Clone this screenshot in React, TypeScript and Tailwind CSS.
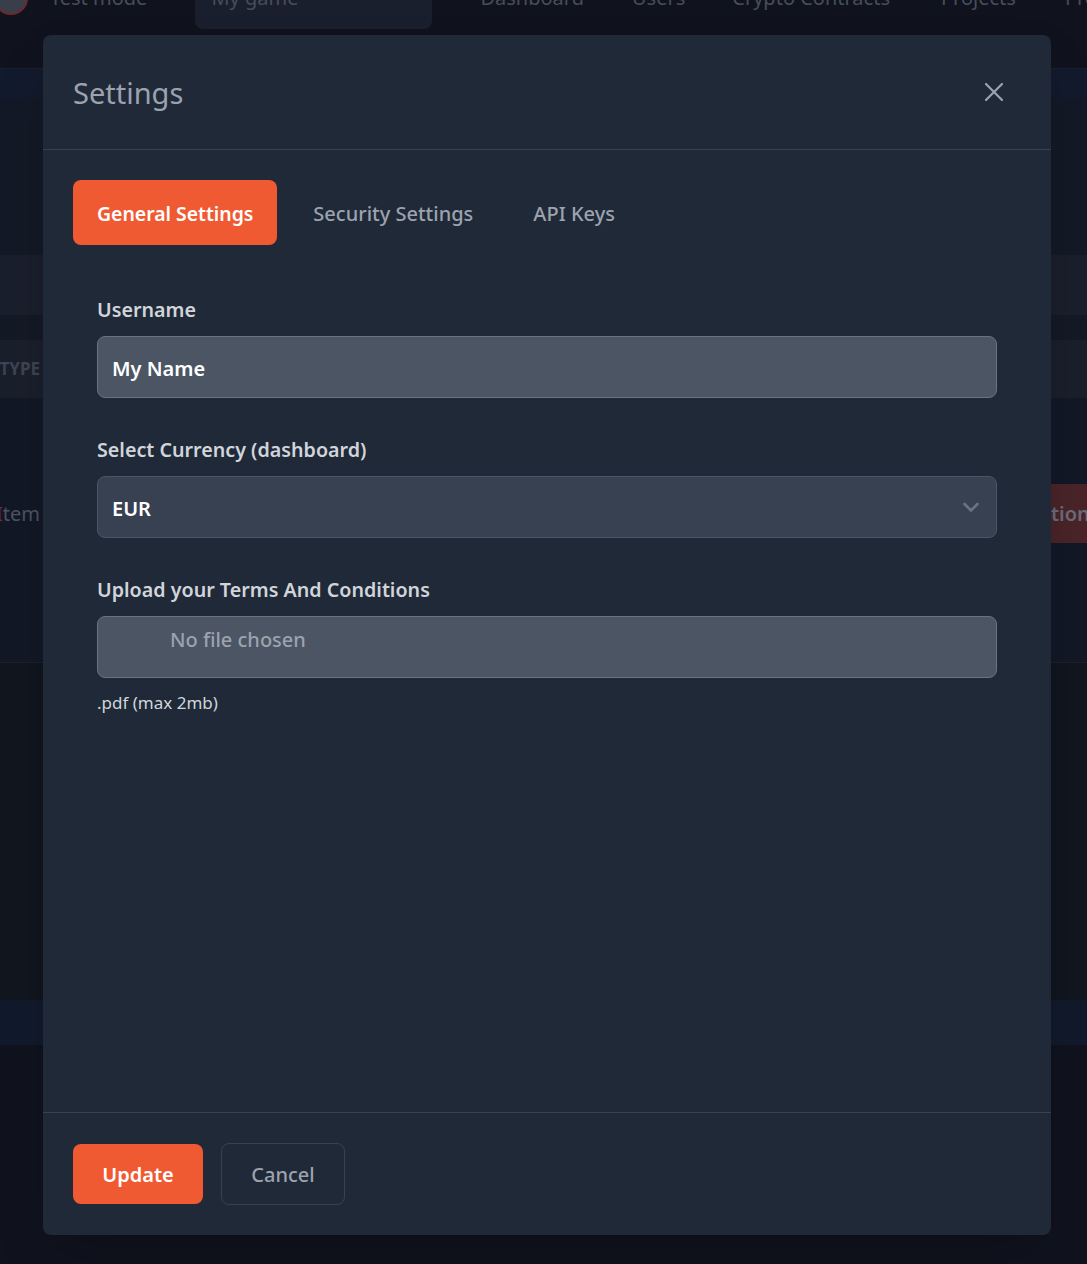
import React from "react";

const font = { fontFamily: '"Noto Sans", "Open Sans", Arial, sans-serif' };

function Background() {
  return (
    <div className="flex flex-col w-full">
      {/* top nav (scrolled partially out of view) */}
      <div className="h-[68px] bg-[#10131d] overflow-hidden">
        <div className="-mt-[33px] h-[62px] flex items-center text-[20px] text-[#474d5b] whitespace-nowrap">
          <div className="-ml-[6px] w-[34px] h-[34px] rounded-full bg-[#3a3e4a] border-2 border-[#6a2b2f] shrink-0" />
          <span className="ml-[22px] shrink-0">Test mode</span>
          <div className="ml-[48px] w-[237px] shrink-0 h-[62px] rounded-lg bg-[#1a1f2d] flex items-center px-4 text-[#474d5b]">
            <span className="flex-1">My game</span>
          </div>
          <span className="ml-[48px] shrink-0">Dashboard</span>
          <span className="ml-[48px] shrink-0">Users</span>
          <span className="ml-[47px] shrink-0">Crypto Contracts</span>
          <span className="ml-[51px] shrink-0">Projects</span>
          <span className="ml-[49px] shrink-0">Profile</span>
        </div>
      </div>
      <div className="h-[30px] bg-[#121a2d] border-t border-[#1a2030]" />
      <div className="h-[157px] bg-[#131926]" />
      <div className="h-[60px] bg-[#1a1f2d]" />
      <div className="h-[25px] bg-[#141926]" />
      <div className="h-[58px] bg-[#1a1f2c] flex items-center">
        <span className="w-[40px] overflow-hidden flex justify-end whitespace-nowrap text-[17px] font-bold text-[#3e4453]">TYPE</span>
      </div>
      <div className="h-[86px] bg-[#121826]" />
      <div className="h-[59px] bg-[#121826] flex items-center">
        <span className="w-[40px] overflow-hidden flex justify-end whitespace-nowrap text-[20px] text-[#4e5461]">
          <span className="text-[#7a2a30]">I</span>tem
        </span>
        <div className="flex-1" />
        <div className="w-[36px] h-[59px] bg-[#4a2429] overflow-hidden flex items-center whitespace-nowrap text-[20px] font-semibold text-[#6a6d79]">
          tion
        </div>
      </div>
      <div className="h-[120px] bg-[#121826] border-b border-[#1b2130]" />
      <div className="h-[337px] bg-[#11161f]" />
      <div className="h-[45px] bg-[#111a2c]" />
      <div className="flex-1 bg-[#10131e]" />
    </div>
  );
}

function ChevronDown() {
  return (
    <svg width="20" height="20" viewBox="0 0 20 20" fill="none">
      <path d="M3.5 7l6.5 6.5L16.5 7" stroke="#6b7280" strokeWidth="2.6" strokeLinecap="round" strokeLinejoin="round" />
    </svg>
  );
}

function CloseIcon() {
  return (
    <svg width="24" height="24" viewBox="0 0 24 24" fill="none">
      <path d="M4 4l16 16M20 4L4 20" stroke="#9ca3af" strokeWidth="2.2" strokeLinecap="round" />
    </svg>
  );
}

function Modal() {
  return (
    <div className="w-[1008px] h-[1200px] bg-[#1f2937] rounded-lg flex flex-col shadow-2xl">
      {/* header */}
      <div className="h-[115px] shrink-0 border-b border-[#374151] flex items-center justify-between pl-[30px] pr-[45px]">
        <h2 className="text-[29px] text-[#9ca3af] leading-none">Settings</h2>
        <button className="-mt-[1px]">
          <CloseIcon />
        </button>
      </div>
      {/* body */}
      <div className="flex-1 px-[30px] pt-[30px]">
        <div className="flex items-center gap-3">
          <button className="h-[65px] px-6 rounded-lg bg-[#f05a32] text-white text-[19.4px] font-semibold pt-[2px]">
            General Settings
          </button>
          <button className="h-[65px] px-6 rounded-lg text-[#9ca3af] text-[20px] font-medium pt-[2px]">
            Security Settings
          </button>
          <button className="h-[65px] px-6 rounded-lg text-[#9ca3af] text-[20px] font-medium pt-[2px]">
            API Keys
          </button>
        </div>
        <div className="px-6 pt-[53px] flex flex-col">
          <label className="text-[19.7px] font-semibold text-[#d1d5db] leading-[24px]">Username</label>
          <div className="mt-[14px] h-[62px] rounded-lg bg-[#4b5563] border border-[#6b7280] flex items-center pl-[14px] pr-4 pt-[3px] text-[20px] font-semibold text-white">
            My Name
          </div>
          <label className="mt-[40px] text-[19.7px] font-semibold text-[#d1d5db] leading-[24px]">Select Currency (dashboard)</label>
          <div className="mt-[14px] h-[62px] rounded-lg bg-[#374151] border border-[#4b5563] flex items-center justify-between pl-[14px] pr-4 text-[20px] font-semibold text-white">
            <span className="pt-[3px]">EUR</span>
            <span className="-mr-[1px]">
              <ChevronDown />
            </span>
          </div>
          <label className="mt-[40px] text-[19.7px] font-semibold text-[#d1d5db] leading-[24px]">Upload your Terms And Conditions</label>
          <div className="mt-[14px] h-[62px] rounded-lg bg-[#4b5563] border border-[#6b7280] flex items-start pl-[72px] pt-[8px] text-[20px] font-medium text-[#9ca3af]">
            No file chosen
          </div>
          <p className="mt-[14px] text-[17px] text-[#d1d5db] leading-[22px]">.pdf (max 2mb)</p>
        </div>
      </div>
      {/* footer */}
      <div className="h-[123px] shrink-0 border-t border-[#374151] flex items-start gap-[18px] pl-[30px] pt-[31px]">
        <button className="w-[130px] h-[60px] rounded-lg bg-[#f05a32] text-white text-[20px] font-semibold pt-[2px]">
          Update
        </button>
        <button className="w-[124px] h-[62px] -mt-[1px] rounded-lg border border-[#374151] text-[#9ca3af] text-[20px] font-medium pt-[2px]">
          Cancel
        </button>
      </div>
    </div>
  );
}

export default function App() {
  return (
    <div className="relative w-full h-[1264px] overflow-hidden bg-[#10131e]" style={font}>
      <Background />
      <div className="absolute inset-0 pl-[43px] pt-[35px]">
        <Modal />
      </div>
    </div>
  );
}
